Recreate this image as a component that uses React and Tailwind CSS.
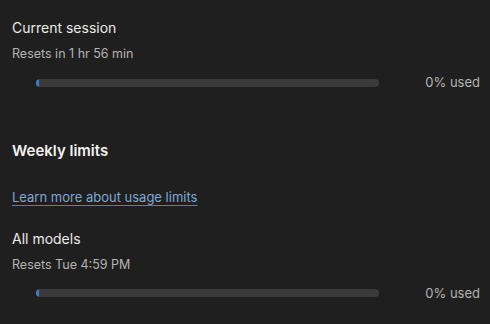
const UsageBar = ({ percent }) => (
  <div className="flex items-center gap-[46px] pl-6">
    <div className="flex-1 h-2 rounded-full bg-[#3b3b3b] overflow-hidden">
      <div className="h-full rounded-full bg-[#3d7cc9]" style={{ width: `${Math.max(percent, 1)}%` }} />
    </div>
    <span className="text-[13px] text-[#b5b4b0]">{percent}% used</span>
  </div>
);

const App = () => {
  return (
    <div
      className="w-[490px] h-[324px] bg-[#1f1f1f] pl-3 pr-[10px] pt-[19px] overflow-hidden"
      style={{ fontFamily: "Inter, 'Noto Sans', sans-serif" }}
    >
      <div className="text-[14px] leading-[18px] text-[#ecebe8]">Current session</div>
      <div className="mt-2 text-[12.5px] leading-[18px] text-[#b5b4b0]">Resets in 1 hr 56 min</div>
      <div className="mt-[10px]">
        <UsageBar percent={0} />
      </div>

      <div className="mt-[49px] text-[15px] leading-[18px] font-semibold text-[#f2f1ee]">Weekly limits</div>
      <a href="#" className="block mt-[28px] text-[13px] leading-[18px] text-[#7ea7db] underline decoration-[#5b7ea8] underline-offset-[3px]">
        Learn more about usage limits
      </a>

      <div className="mt-6 text-[14px] leading-[18px] text-[#ecebe8]">All models</div>
      <div className="mt-[8px] text-[12.5px] leading-[18px] text-[#b5b4b0]">Resets Tue 4:59 PM</div>
      <div className="mt-[10px]">
        <UsageBar percent={0} />
      </div>
    </div>
  );
};

export default App;
